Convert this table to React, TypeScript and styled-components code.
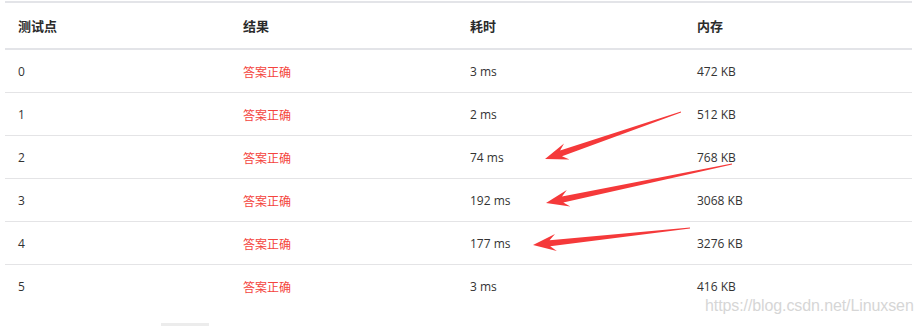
import styled, { createGlobalStyle } from 'styled-components';

const GlobalStyle = createGlobalStyle`
	html, body {
		margin: 0;
		padding: 0;
		background: #fff;
	}
	body {
		font-family: 'Open Sans', 'Noto Sans CJK SC', sans-serif;
	}
`;

type Row = { id: number; time: string; mem: string };

const rows: Row[] = [
	{ id: 0, time: '3 ms', mem: '472 KB' },
	{ id: 1, time: '2 ms', mem: '512 KB' },
	{ id: 2, time: '74 ms', mem: '768 KB' },
	{ id: 3, time: '192 ms', mem: '3068 KB' },
	{ id: 4, time: '177 ms', mem: '3276 KB' },
	{ id: 5, time: '3 ms', mem: '416 KB' },
];

const columns = [225, 227, 227, 228];

type Pt = [number, number];

// tapered annotation arrow, thin at the tail, swept head at the tip
const arrowPoints = (tail: Pt, tip: Pt) => {
	const dx = tip[0] - tail[0];
	const dy = tip[1] - tail[1];
	const len = Math.hypot(dx, dy);
	const ux = dx / len;
	const uy = dy / len;
	const nx = -uy;
	const ny = ux;
	const at = (d: number, w: number): string => {
		const x = tail[0] + ux * d + nx * w;
		const y = tail[1] + uy * d + ny * w;
		return `${x.toFixed(1)},${y.toFixed(1)}`;
	};
	const base = len - 17;
	return [
		at(0, 0.4),
		at(base, 3),
		at(len - 23, 8.5),
		at(len, 0),
		at(len - 23, -8.5),
		at(base, -3),
		at(0, -0.4),
	].join(' ');
};

const arrows: [Pt, Pt][] = [
	[
		[681, 112],
		[545, 159],
	],
	[
		[732, 164],
		[546, 203],
	],
	[
		[690, 228],
		[533, 245],
	],
];

const App = () => {
	return (
		<Page>
			<GlobalStyle />
			<Table>
				<colgroup>
					{columns.map((w, i) => (
						<col key={i} style={{ width: w }} />
					))}
				</colgroup>
				<thead>
					<tr>
						<Th>测试点</Th>
						<Th>结果</Th>
						<Th>耗时</Th>
						<Th>内存</Th>
					</tr>
				</thead>
				<tbody>
					{rows.map((r) => (
						<Tr key={r.id} $last={r.id === rows.length - 1}>
							<Td>{r.id}</Td>
							<Td $accent>答案正确</Td>
							<Td>{r.time}</Td>
							<Td>{r.mem}</Td>
						</Tr>
					))}
				</tbody>
			</Table>

			<Footer>
				<PagerStub />
			</Footer>

			<Overlay width="923" height="326" viewBox="0 0 923 326">
				{arrows.map(([tail, tip], i) => (
					<polygon key={i} points={arrowPoints(tail, tip)} fill="#f5393a" />
				))}
			</Overlay>

			<Watermark>https://blog.csdn.net/Linuxsen</Watermark>
		</Page>
	);
};

export default App;

const Page = styled.div`
	position: relative;
	width: 923px;
	height: 326px;
	overflow: hidden;
	padding: 1px 0 0 5px;
	box-sizing: border-box;
	background: #fff;
`;

const Table = styled.table`
	width: 907px;
	border-collapse: collapse;
	table-layout: fixed;
	font-size: 12px;
	color: #333;
`;

const Th = styled.th`
	height: 47px;
	padding: 0 0 1px 13px;
	text-align: left;
	font-size: 13px;
	font-weight: 700;
	color: #2b2b2b;
	border-top: 2px solid #e3e4e8;
	border-bottom: 2px solid #e3e4e8;
	box-sizing: border-box;
	vertical-align: middle;
`;

const Tr = styled.tr<{ $last?: boolean }>`
	height: 43px;
	border-bottom: ${(p) => (p.$last ? 'none' : '1px solid #e4e4e6')};
`;

const Td = styled.td<{ $accent?: boolean }>`
	padding: 2px 0 0 13px;
	color: ${(p) => (p.$accent ? '#f4443d' : '#333')};
	vertical-align: middle;
	white-space: nowrap;
`;

const Footer = styled.div`
	display: flex;
	padding: 16px 0 0 156px;
`;

const PagerStub = styled.div`
	width: 48px;
	height: 4px;
	background: #ececec;
`;

const Overlay = styled.svg`
	position: absolute;
	left: 0;
	top: 0;
	pointer-events: none;
`;

const Watermark = styled.div`
	position: absolute;
	left: 705px;
	top: 297px;
	font-family: 'Liberation Sans', Arial, sans-serif;
	font-size: 16px;
	line-height: 18px;
	color: #d6d6d6;
	letter-spacing: -0.1px;
	text-shadow: 0 0 1px #fff;
`;
